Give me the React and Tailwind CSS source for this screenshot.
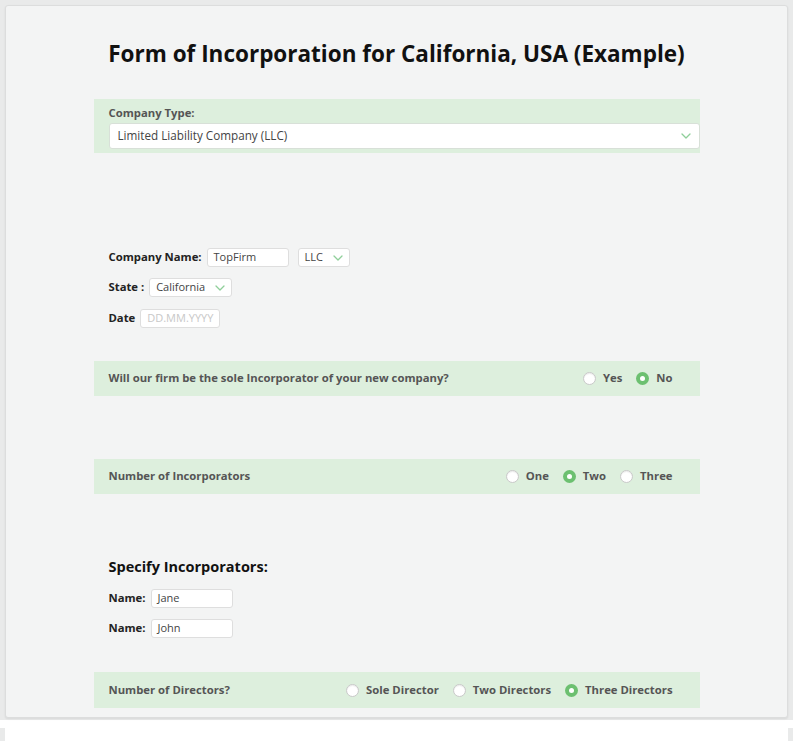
import React from 'react';

const Chevron = () => (
  <svg width="10" height="6" viewBox="0 0 10 6" className="shrink-0">
    <polyline points="1,1 5,5 9,1" fill="none" stroke="#8fcf9a" strokeWidth="1.3" strokeLinecap="round" strokeLinejoin="round" />
  </svg>
);

const Radio = ({ checked, label }) => (
  <label className="flex items-center gap-[7px]">
    {checked ? (
      <span className="w-[13px] h-[13px] rounded-full bg-[#6cc070] flex items-center justify-center">
        <span className="w-[5px] h-[5px] rounded-full bg-white" />
      </span>
    ) : (
      <span className="w-[13px] h-[13px] rounded-full bg-white border border-[#c9c9c9] shadow-[inset_0_1px_1px_rgba(0,0,0,0.08)]" />
    )}
    <span className="text-[11.3px] font-bold text-[#555]">{label}</span>
  </label>
);

const Panel = ({ title, options, checkedIndex, height = 'h-[35px]' }) => (
  <div className={`${height} bg-[#ddefdd] flex items-center justify-between pl-[15px] pr-[27px]`}>
    <span className="text-[11.3px] font-bold text-[#555]">{title}</span>
    <div className="flex items-center gap-[14px]">
      {options.map((o, i) => (
        <Radio key={o} label={o} checked={i === checkedIndex} />
      ))}
    </div>
  </div>
);

const Box = ({ className, children }) => (
  <div className={`h-[19px] bg-white border border-[#dedede] rounded-[3px] flex items-center px-[6px] text-[11px] ${className}`}>
    {children}
  </div>
);

export default function App() {
  return (
    <div className="min-h-screen bg-white font-['Open_Sans',sans-serif]">
      <div className="bg-[#e9eaea] px-[5px] pt-[5px] pb-[2px]">
        <div className="h-[713px] bg-[#f3f4f4] rounded-[3px] border border-[#dcdddd] shadow-[0_1px_2px_rgba(0,0,0,0.08)]">
          <h1 className="text-center text-[22.5px] font-bold text-[#111] pt-[33px] leading-[30px]">
            Form of Incorporation for California, USA (Example)
          </h1>

          <div className="w-[606px] mx-auto">
            <div className="mt-[30px] bg-[#ddefdd] pl-[15px] pt-[6px] pb-[4px]">
              <div className="text-[11.3px] font-bold text-[#555] leading-[16px]">Company Type:</div>
              <div className="mt-[2px] h-[26px] bg-white border border-[#d8e0d8] rounded-[3px] flex items-center justify-between pl-[8px] pr-[8px]">
                <span className="text-[11.7px] text-[#444]">Limited Liability Company (LLC)</span>
                <Chevron />
              </div>
            </div>

            <div className="pl-[15px] mt-[95px]">
              <div className="flex items-center h-[19px]">
                <span className="text-[11.3px] font-bold text-[#222]">Company Name:</span>
                <Box className="ml-[5px] w-[82px] text-[#444]">TopFirm</Box>
                <Box className="ml-[9px] w-[52px] text-[#444] justify-between">
                  <span>LLC</span>
                  <Chevron />
                </Box>
              </div>
              <div className="flex items-center h-[19px] mt-[11px]">
                <span className="text-[11.3px] font-bold text-[#222]">State :</span>
                <Box className="ml-[5px] w-[83px] text-[#444] justify-between">
                  <span>California</span>
                  <Chevron />
                </Box>
              </div>
              <div className="flex items-center h-[19px] mt-[12px]">
                <span className="text-[11.3px] font-bold text-[#222]">Date</span>
                <Box className="ml-[5px] w-[80px] text-[#c8c8c8] px-[4px]">DD.MM.YYYY</Box>
              </div>
            </div>

            <div className="mt-[33px]">
              <Panel
                title="Will our firm be the sole Incorporator of your new company?"
                options={['Yes', 'No']}
                checkedIndex={1}
              />
            </div>

            <div className="mt-[63px]">
              <Panel title="Number of Incorporators" options={['One', 'Two', 'Three']} checkedIndex={1} />
            </div>

            <div className="pl-[15px] mt-[63px]">
              <div className="text-[14.5px] font-bold text-[#111] leading-[20px]">Specify Incorporators:</div>
              <div className="flex items-center mt-[12px] h-[18px]">
                <span className="text-[11.3px] font-bold text-[#222]">Name:</span>
                <Box className="ml-[5px] w-[82px] h-[18px] text-[#444] px-[4px]">Jane</Box>
              </div>
              <div className="flex items-center mt-[12px] h-[18px]">
                <span className="text-[11.3px] font-bold text-[#222]">Name:</span>
                <Box className="ml-[5px] w-[82px] h-[18px] text-[#444] px-[4px]">John</Box>
              </div>
            </div>

            <div className="mt-[35px]">
              <Panel
                title="Number of Directors?"
                options={['Sole Director', 'Two Directors', 'Three Directors']}
                checkedIndex={2}
                height="h-[36px]"
              />
            </div>
          </div>
        </div>
      </div>
      <div className="mt-[8px] bg-[#e9eaea] px-[5px] h-[20px]">
        <div className="h-full bg-white" />
      </div>
    </div>
  );
}
